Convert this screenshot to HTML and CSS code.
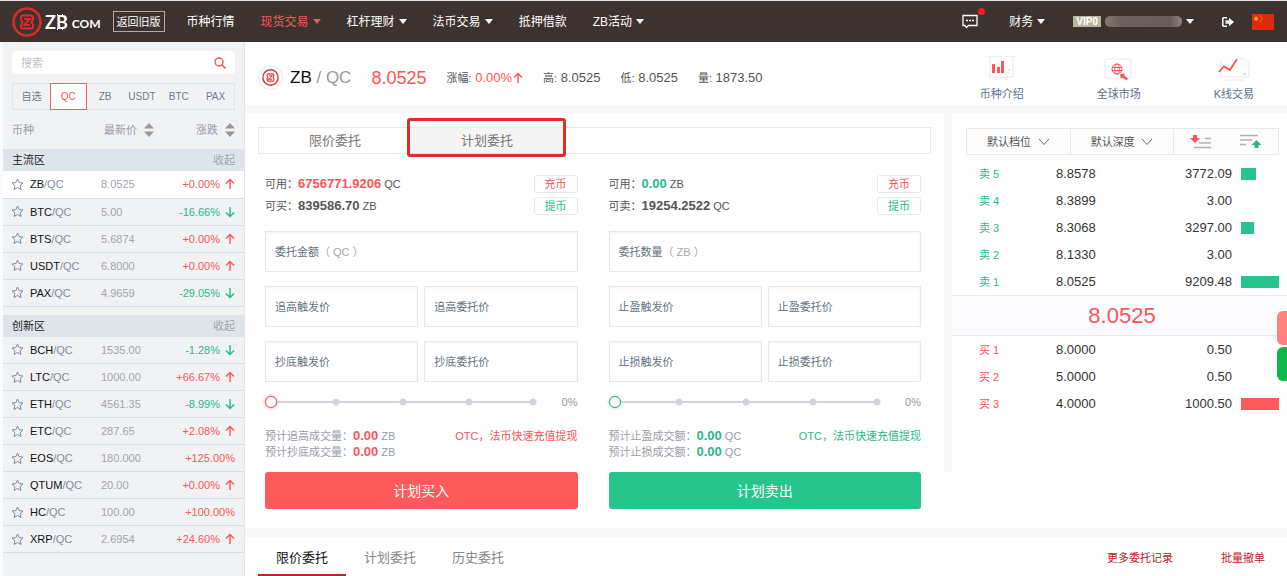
FILE: index.html
```html
<!DOCTYPE html>
<html lang="zh-CN">
<head>
<meta charset="utf-8">
<meta name="viewport" content="width=device-width, initial-scale=1">
<title>ZB/QC - ZB.COM</title>
<link rel="stylesheet" href="styles.css">
</head>
<body>
<svg class="sprite" aria-hidden="true">
  <symbol id="star" viewBox="0 0 13 13"><path d="M6.5 1 8.1 4.6 12 5 9.1 7.6 10 11.5 6.5 9.5 3 11.5 3.9 7.6 1 5 4.9 4.6Z" fill="none" stroke="currentColor" stroke-linejoin="round"/></symbol>
  <symbol id="up" viewBox="0 0 10 12"><path d="M5 11V1.5M1 5.5 5 1.5 9 5.5" fill="none" stroke="currentColor" stroke-width="1.4"/></symbol>
  <symbol id="down" viewBox="0 0 10 12"><path d="M5 1V10.500M1 6.500 5 10.500 9 6.500" fill="none" stroke="currentColor" stroke-width="1.4"/></symbol>
  <symbol id="sort" viewBox="0 0 10 14"><path d="M5 0 10 5.500H0ZM0 8.500H10L5 14Z" fill="currentColor"/></symbol>
  <symbol id="chev" viewBox="0 0 12 8"><path d="M1 1 6 6.500 11 1" fill="none" stroke="currentColor"/></symbol>
  <symbol id="mark" viewBox="0 0 30 30"><circle cx="15" cy="15" r="13.500" fill="none" stroke="currentColor" stroke-width="2.600"/><path d="M11 8.500H19Q21 8.500 21 10.500V12.500L19.500 15 21 17.500V19.500Q21 21.500 19 21.500H11Q9 21.500 9 19.500V17.500L10.500 15 9 12.500V10.500Q9 8.500 11 8.500Z" fill="none" stroke="currentColor" stroke-width="2" stroke-linejoin="round"/><path d="M12 12H18L12 18H18" fill="none" stroke="currentColor" stroke-width="1.800"/></symbol>
</svg>

<header class="header">
  <a class="logo" href="#"><svg class="logo-mark"><use href="#mark"/></svg><span class="logo-zb">ZB</span><span class="logo-com">COM</span></a>
  <button class="old-version" type="button">返回旧版</button>
  <nav class="nav">
    <a href="#">币种行情</a>
    <a class="active caret" href="#">现货交易</a>
    <a class="caret" href="#">杠杆理财</a>
    <a class="caret" href="#">法币交易</a>
    <a href="#">抵押借款</a>
    <a class="caret" href="#">ZB活动</a>
  </nav>
  <div class="account">
    <button class="message" type="button" aria-label="消息"><svg width="16" height="15" viewBox="0 0 16 15"><path d="M1 1.500H15V11.500H6.500L4.500 13.500 3 11.500H1Z" fill="none" stroke="#fff" stroke-width="1.300"/><path d="M4 6.500H6M7 6.500H9M10 6.500H12" stroke="#fff" stroke-width="1.500"/></svg></button>
    <a class="caret finance" href="#">财务</a>
    <a class="caret user" href="#"><span class="vip">VIP0</span><span class="username"></span></a>
    <button class="logout" type="button" aria-label="退出"><svg width="12" height="10" viewBox="0 0 12 10"><path d="M5 .8H1.500Q.8.8.8 1.500V8.500Q.8 9.200 1.500 9.200H5" fill="none" stroke="#fff" stroke-width="1.500"/><path d="M3.500 3.300H7V.8L12 5 7 9.200V6.700H3.500Z" fill="#fff"/></svg></button>
    <button class="flag" type="button" aria-label="中文"><svg width="22" height="16" viewBox="0 0 22 16"><path d="M0 0H22V16H0Z" fill="#de2910"/><path d="M4 1.500 4.800 3.700H7L5.200 5 5.900 7.200 4 5.900 2.100 7.200 2.800 5 1 3.700H3.200Z" fill="#ffb400"/><path d="M8 1.500h1v1h-1zM9.500 3h1v1h-1zM9.500 5h1v1h-1zM8 6.500h1v1h-1z" fill="#ffb400"/></svg></button>
  </div>
</header>

<div class="page">
  <aside class="sidebar">
    <label class="search"><input type="text" placeholder="搜索" aria-label="搜索"><svg width="12" height="12" viewBox="0 0 12 12"><circle cx="5" cy="5" r="4" fill="none" stroke="#f0565a" stroke-width="1.400"/><path d="M8 8 11.500 11.500" stroke="#f0565a" stroke-width="1.600"/></svg></label>
    <div class="markets">
      <button type="button">自选</button><button class="active" type="button">QC</button><button type="button">ZB</button><button type="button">USDT</button><button type="button">BTC</button><button type="button">PAX</button>
    </div>
    <div class="list-head"><span>币种</span><span class="sortable">最新价<svg class="sort"><use href="#sort"/></svg></span><span class="sortable last">涨跌<svg class="sort"><use href="#sort"/></svg></span></div>

    <section class="zone">
      <h2>主流区<button type="button">收起</button></h2>
      <table class="coins">
        <tr class="selected"><td><svg class="star"><use href="#star"/></svg></td><td><b>ZB</b>/QC</td><td>8.0525</td><td class="red">+0.00%<svg class="arrow"><use href="#up"/></svg></td></tr>
        <tr><td><svg class="star"><use href="#star"/></svg></td><td><b>BTC</b>/QC</td><td>5.00</td><td class="green">-16.66%<svg class="arrow"><use href="#down"/></svg></td></tr>
        <tr><td><svg class="star"><use href="#star"/></svg></td><td><b>BTS</b>/QC</td><td>5.6874</td><td class="red">+0.00%<svg class="arrow"><use href="#up"/></svg></td></tr>
        <tr><td><svg class="star"><use href="#star"/></svg></td><td><b>USDT</b>/QC</td><td>6.8000</td><td class="red">+0.00%<svg class="arrow"><use href="#up"/></svg></td></tr>
        <tr><td><svg class="star"><use href="#star"/></svg></td><td><b>PAX</b>/QC</td><td>4.9659</td><td class="green">-29.05%<svg class="arrow"><use href="#down"/></svg></td></tr>
      </table>
    </section>
    <section class="zone">
      <h2>创新区<button type="button">收起</button></h2>
      <table class="coins">
        <tr><td><svg class="star"><use href="#star"/></svg></td><td><b>BCH</b>/QC</td><td>1535.00</td><td class="green">-1.28%<svg class="arrow"><use href="#down"/></svg></td></tr>
        <tr><td><svg class="star"><use href="#star"/></svg></td><td><b>LTC</b>/QC</td><td>1000.00</td><td class="red">+66.67%<svg class="arrow"><use href="#up"/></svg></td></tr>
        <tr><td><svg class="star"><use href="#star"/></svg></td><td><b>ETH</b>/QC</td><td>4561.35</td><td class="green">-8.99%<svg class="arrow"><use href="#down"/></svg></td></tr>
        <tr><td><svg class="star"><use href="#star"/></svg></td><td><b>ETC</b>/QC</td><td>287.65</td><td class="red">+2.08%<svg class="arrow"><use href="#up"/></svg></td></tr>
        <tr><td><svg class="star"><use href="#star"/></svg></td><td><b>EOS</b>/QC</td><td>180.000</td><td class="red">+125.00%</td></tr>
        <tr><td><svg class="star"><use href="#star"/></svg></td><td><b>QTUM</b>/QC</td><td>20.00</td><td class="red">+0.00%<svg class="arrow"><use href="#up"/></svg></td></tr>
        <tr><td><svg class="star"><use href="#star"/></svg></td><td><b>HC</b>/QC</td><td>100.00</td><td class="red">+100.00%</td></tr>
        <tr><td><svg class="star"><use href="#star"/></svg></td><td><b>XRP</b>/QC</td><td>2.6954</td><td class="red">+24.60%<svg class="arrow"><use href="#up"/></svg></td></tr>
      </table>
    </section>
  </aside>

  <main class="main">
    <section class="ticker">
      <span class="coin"><svg width="17" height="17"><use href="#mark"/></svg></span>
      <h1>ZB <span>/ QC</span></h1>
      <strong class="last-price">8.0525</strong>
      <ul class="stats">
        <li><span>涨幅:</span> <i class="red">0.00%<svg class="arrow"><use href="#up"/></svg></i></li>
        <li><span>高:</span> 8.0525</li>
        <li><span>低:</span> 8.0525</li>
        <li><span>量:</span> 1873.50</li>
      </ul>
      <div class="shortcuts">
        <a href="#"><svg width="32" height="28" viewBox="0 0 32 28"><path d="M1 2.500H31M4 3V23H27V3M8 26 15 23 22 26" fill="none" stroke="#f1f1f4" stroke-width="1.500"/><path d="M6 10h3v9H6zM11 13h3v6h-3zM15 7h3v12h-3z" fill="#fb5558"/><path d="M23 15v2M23 18v2" stroke="#ececf1" stroke-width="2"/></svg>币种介绍</a>
        <a href="#"><svg width="32" height="28" viewBox="0 0 32 28"><rect x="2" y="5" width="26" height="19" rx="2" fill="none" stroke="#f1f1f4" stroke-width="1.500"/><g fill="none" stroke="#fb5558"><circle cx="14" cy="15" r="5"/><ellipse cx="14" cy="15" rx="2.300" ry="5"/><path d="M9 13.500h10M9 16.500h10"/></g><path d="M17 20 22 19.500 21 21.500 25 24.500 23.500 26.500 19.500 23.500 18 25Z" fill="#fb5558"/></svg>全球市场</a>
        <a href="#"><svg width="32" height="28" viewBox="0 0 32 28"><path d="M3 7V23H31V9Q28 4 20 5M7 26H26" fill="none" stroke="#f1f1f4" stroke-width="1.500"/><path d="M1 18 6 12.500 12 16 19 5" fill="none" stroke="#fb5558" stroke-width="1.800"/><path d="M25 20h3" stroke="#f9aaac"/></svg>K线交易</a>
      </div>
    </section>

    <div class="trade">
      <section class="order">
        <div class="order-tabs"><button type="button">限价委托</button><button class="active" type="button">计划委托</button></div>
        <div class="forms">
          <form class="buy">
            <div class="balance">
              <p>可用：<strong class="tone">6756771.9206</strong> QC</p><button class="red" type="button">充币</button>
              <p>可买：<strong>839586.70</strong> ZB</p><button class="green" type="button">提币</button>
            </div>
            <div class="fields">
              <label class="field wide"><span>委托金额<em>（ QC ）</em></span><input type="text"></label>
              <label class="field"><span>追高触发价</span><input type="text"></label>
              <label class="field"><span>追高委托价</span><input type="text"></label>
              <label class="field"><span>抄底触发价</span><input type="text"></label>
              <label class="field"><span>抄底委托价</span><input type="text"></label>
            </div>
            <div class="slider"><input type="range" min="0" max="100" value="0" aria-label="买入比例"><output>0%</output></div>
            <div class="estimate"><div><p>预计追高成交量：<strong class="tone">0.00</strong> ZB</p><p>预计抄底成交量：<strong class="tone">0.00</strong> ZB</p></div><a class="tone" href="#">OTC，法币快速充值提现</a></div>
            <button class="submit" type="button">计划买入</button>
          </form>
          <form class="sell">
            <div class="balance">
              <p>可用：<strong class="tone">0.00</strong> ZB</p><button class="red" type="button">充币</button>
              <p>可卖：<strong>19254.2522</strong> QC</p><button class="green" type="button">提币</button>
            </div>
            <div class="fields">
              <label class="field wide"><span>委托数量<em>（ ZB ）</em></span><input type="text"></label>
              <label class="field"><span>止盈触发价</span><input type="text"></label>
              <label class="field"><span>止盈委托价</span><input type="text"></label>
              <label class="field"><span>止损触发价</span><input type="text"></label>
              <label class="field"><span>止损委托价</span><input type="text"></label>
            </div>
            <div class="slider"><input type="range" min="0" max="100" value="0" aria-label="卖出比例"><output>0%</output></div>
            <div class="estimate"><div><p>预计止盈成交额：<strong class="tone">0.00</strong> QC</p><p>预计止损成交额：<strong class="tone">0.00</strong> QC</p></div><a class="tone" href="#">OTC，法币快速充值提现</a></div>
            <button class="submit" type="button">计划卖出</button>
          </form>
        </div>
      </section>

      <section class="book">
        <div class="book-tools">
          <label><select aria-label="档位"><option>默认档位</option></select><svg class="chev"><use href="#chev"/></svg></label>
          <label><select aria-label="深度"><option>默认深度</option></select><svg class="chev"><use href="#chev"/></svg></label>
          <div class="views">
            <button type="button" aria-label="卖盘"><svg width="22" height="15" viewBox="0 0 22 15"><path d="M3 1H7V4H10L5 9 0 4H3Z" fill="#fb5558"/><path d="M15 4.500H21M9 9H21M4 13.500H21" stroke="#b0b0b8" stroke-width="1.600"/></svg></button>
            <button type="button" aria-label="买盘"><svg width="22" height="15" viewBox="0 0 22 15"><path d="M0 1.500H18M0 6H12M0 10.500H6" stroke="#b0b0b8" stroke-width="1.600"/><path d="M16.500 6 21.500 11H18.500V14H14.500V11H11.500Z" fill="#29b889"/></svg></button>
          </div>
        </div>
        <table class="depth sells">
          <tr><th scope="row">卖 5</th><td>8.8578</td><td>3772.09</td><td><i class="bar" style="width:40%"></i></td></tr>
          <tr><th scope="row">卖 4</th><td>8.3899</td><td>3.00</td><td></td></tr>
          <tr><th scope="row">卖 3</th><td>8.3068</td><td>3297.00</td><td><i class="bar" style="width:35%"></i></td></tr>
          <tr><th scope="row">卖 2</th><td>8.1330</td><td>3.00</td><td></td></tr>
          <tr><th scope="row">卖 1</th><td>8.0525</td><td>9209.48</td><td><i class="bar" style="width:100%"></i></td></tr>
        </table>
        <div class="current">8.0525</div>
        <table class="depth buys">
          <tr><th scope="row">买 1</th><td>8.0000</td><td>0.50</td><td></td></tr>
          <tr><th scope="row">买 2</th><td>5.0000</td><td>0.50</td><td></td></tr>
          <tr><th scope="row">买 3</th><td>4.0000</td><td>1000.50</td><td><i class="bar" style="width:100%"></i></td></tr>
        </table>
      </section>
    </div>

    <section class="records">
      <div class="record-tabs"><button class="active" type="button">限价委托</button><button type="button">计划委托</button><button type="button">历史委托</button></div>
      <div class="record-links"><a href="#">更多委托记录</a><a href="#">批量撤单</a></div>
    </section>
  </main>
</div>
<div class="floaters"><button class="float-red" type="button" aria-label="买入"></button><button class="float-green" type="button" aria-label="卖出"></button></div>
</body>
</html>
```
FILE: styles.css
```css
:root {
  --red: #fb5558;
  --green: #29b889;
  --muted: #9a9cab;
  --line: #e6e8eb;
}
* { box-sizing: border-box; }
body {
  margin: 0;
  height: 100vh;
  overflow: hidden;
  display: flex;
  flex-direction: column;
  background: #fff;
  color: #555;
  font: 11px/16px "Liberation Sans", "Noto Sans CJK SC", sans-serif;
}
h1, h2, p, ul { margin: 0; padding: 0; font-weight: normal; }
a { color: inherit; text-decoration: none; }
button, input, select { font: inherit; color: inherit; border: 0; background: none; padding: 0; margin: 0; outline: 0; }
button { cursor: pointer; }
i, em { font-style: normal; }
table { border-collapse: collapse; table-layout: fixed; width: 100%; }
td, th { padding: 0; font-weight: normal; text-align: left; }
svg { flex: none; }
.sprite { position: absolute; width: 0; height: 0; }
.red { color: var(--red); }
.green { color: var(--green); }
.arrow { width: 10px; height: 12px; margin-left: 5px; vertical-align: -2px; }

/* Header */
.header {
  flex: none;
  display: flex;
  align-items: center;
  height: 42px;
  padding: 0 13px 0 12px;
  border-top: 1px solid #e8e4e2;
  background: #3c3230;
  color: #fff;
  font-size: 12px;
}
.logo { display: flex; align-items: center; }
.logo-mark { width: 30px; height: 30px; color: #dc2a26; }
.logo-zb { position: relative; margin-left: 3px; font: bold 18px/20px Lato, sans-serif; }
.logo-zb::before, .logo-zb::after { content: ""; position: absolute; right: 5px; width: 4px; height: 2px; border: solid #fff; border-width: 0 1px; }
.logo-zb::before { top: 2px; }
.logo-zb::after { bottom: 2px; }
.logo-com { margin: 4px 0 0 4px; font: bold 12px/16px Lato, sans-serif; }
.old-version { height: 21px; margin: 0 22px 0 12px; padding: 0 3px; border: 1px solid #b3a9a5; line-height: 18px; font-size: 11px; }
.nav { display: flex; gap: 26px; }
.nav .active { color: var(--red); }
.caret { display: flex; align-items: center; gap: 4px; }
.caret::after { content: ""; border: 5px solid transparent; border-top-color: currentColor; border-bottom: 0; border-left-width: 4px; border-right-width: 4px; }
.account { display: flex; align-items: center; margin-left: auto; }
.message { position: relative; display: flex; }
.message::after { content: ""; position: absolute; right: -7px; top: -6px; width: 7px; height: 7px; border-radius: 50%; background: #ee2222; }
.finance { margin: 0 28px 0 31px; }
.user { margin-right: 28px; }
.vip { height: 11px; padding: 0 3px; background: #b9b5a0; font: bold 10px/11px "Liberation Sans", sans-serif; }
.username { width: 77px; height: 11px; border-radius: 5px; background: linear-gradient(90deg, #817875, #6b615e 20%, #665c59 85%, #8a817e); }
.logout { display: flex; margin-right: 18px; }
.flag { display: flex; }

/* Sidebar */
.page { flex: 1; display: flex; min-height: 0; }
.sidebar { flex: none; width: 245px; border-left: 3px solid #fafbfc; border-right: 1px solid #e2e4e7; background: #f1f2f4; }
.search { display: flex; align-items: center; height: 23px; margin: 9px 9px 9px; padding: 0 9px; border-radius: 4px; background: #fff; }
.search input { flex: 1; min-width: 0; }
.search input::placeholder { color: #bfc1c8; }
.markets { display: grid; grid-template-columns: repeat(6, 1fr); height: 27px; margin: 0 9px; border: 1px solid #dfe4ea; color: #6b7b90; font-size: 10px; }
.markets .active { margin: -1px 0; border: 1px solid #ee6468; background: #fff; color: var(--red); }
.list-head { display: flex; align-items: center; height: 39px; padding: 0 9px; color: var(--muted); }
.list-head > span:first-child { width: 92px; }
.sortable { display: flex; align-items: center; gap: 7px; }
.sortable.last { margin-left: auto; }
.sort { width: 10px; height: 14px; color: #999; }
.zone { margin-bottom: 8px; }
.zone h2 { display: flex; justify-content: space-between; height: 22px; padding: 0 9px; background: #dfe4eb; color: #222; font-size: 11px; line-height: 22px; }
.zone h2 button { color: #9fa5b0; }
.coins tr { height: 27px; border-bottom: 1px solid #dadcdf; }
.coins .selected { background: #fff; }
.coins td { color: #858a9b; white-space: nowrap; }
.coins td:nth-child(1) { width: 27px; padding-left: 8px; }
.coins td:nth-child(2) { width: 71px; }
.coins td:nth-child(3) { color: #a2a5ae; }
.coins td:nth-child(4) { width: 74px; padding-right: 9px; text-align: right; }
.coins td.red { color: var(--red); }
.coins td.green { color: var(--green); }
.coins b { color: #111; font-weight: normal; }
.star { display: block; width: 13px; height: 13px; color: #858a9b; }

/* Ticker */
.main { flex: 1; min-width: 0; display: flex; flex-direction: column; }
.ticker { display: flex; align-items: center; height: 63px; padding: 8px 33px 0 13px; }
.coin { display: grid; place-items: center; width: 25px; height: 25px; border: 1px solid #e8e8e8; border-radius: 50%; color: #dc3a36; }
.ticker h1 { margin-left: 7px; color: #111; font-size: 17px; line-height: 24px; }
.ticker h1 span { color: #999; }
.last-price { margin-left: 20px; color: var(--red); font-size: 18px; font-weight: normal; }
.stats { display: flex; gap: 20px; margin-left: 20px; list-style: none; font-size: 13px; }
.stats span { font-size: 11px; }
.stats .arrow { margin-left: 1px; }
.shortcuts { display: flex; gap: 73px; margin-left: auto; color: #61708a; }
.shortcuts a { display: flex; flex-direction: column; align-items: center; gap: 4px; }

/* Order entry */
.trade { display: flex; align-items: flex-start; border-top: 8px solid #f8f8f8; border-bottom: 9px solid #f8f8f8; }
.order { flex: 1; min-width: 0; padding: 14px 13px 19px; }
.order-tabs { display: flex; height: 27px; border: 1px solid var(--line); color: #777; font-size: 13px; }
.order-tabs button { width: 152px; }
.order-tabs .active { position: relative; background: #f5f5f6; }
.order-tabs .active::after { content: ""; position: absolute; inset: -10px -3px -4px -4px; border: 3px solid #e12d23; border-radius: 3px; }
.forms { display: flex; gap: 31px; padding: 21px 10px 0 7px; }
.forms form { flex: 1; min-width: 0; }
.buy { --tone: var(--red); --fill: #ff5b5d; --glow: #fbb9b6; --ring: #c9615c; }
.sell { --tone: var(--green); --fill: #27c58d; --glow: #bdeedd; --ring: #3a9c7b; }
.tone { color: var(--tone); }
.balance { display: grid; grid-template-columns: 1fr 44px; gap: 4px; line-height: 18px; }
.balance strong { font-size: 13px; }
.balance button { height: 18px; border: 1px solid var(--line); border-radius: 3px; line-height: 16px; }
.fields { display: grid; grid-template-columns: 1fr 1fr; gap: 14px 6px; margin-top: 16px; }
.field { display: flex; align-items: center; min-width: 0; height: 41px; padding: 0 9px; border: 1px solid var(--line); box-shadow: inset 0 1px 3px #0000000d; color: #66727e; }
.field.wide { grid-column: 1 / -1; }
.field span { flex: none; }
.field em { color: #a5a7b0; }
.field input { flex: 1; min-width: 0; }
.slider { display: flex; align-items: center; justify-content: space-between; height: 40px; color: #999; }
.slider input {
  appearance: none;
  width: 88%;
  height: 14px;
  background:
    radial-gradient(circle, #d3d2df 3px, transparent 4px) 25% 50% / 8px 8px no-repeat,
    radial-gradient(circle, #d3d2df 3px, transparent 4px) 50% 50% / 8px 8px no-repeat,
    radial-gradient(circle, #d3d2df 3px, transparent 4px) 75% 50% / 8px 8px no-repeat,
    radial-gradient(circle, #d3d2df 3px, transparent 4px) 99% 50% / 8px 8px no-repeat,
    linear-gradient(#d3d2df, #d3d2df) 50% 50% / 96% 2px no-repeat;
}
.slider input::-webkit-slider-thumb { appearance: none; width: 12px; height: 12px; border: 1px solid var(--ring); border-radius: 50%; background: #fff; box-shadow: 0 0 3px 1px var(--glow); }
.estimate { display: flex; justify-content: space-between; margin-top: 6px; color: var(--muted); }
.estimate strong { font-size: 13px; }
.submit { display: block; width: 100%; height: 37px; margin-top: 12px; border-radius: 3px; background: var(--fill); color: #fff; font-size: 14px; }

/* Order book */
.book { flex: none; width: 343px; min-height: 359px; border-left: 8px solid #f8f8f8; }
.book-tools { display: grid; grid-template-columns: repeat(3, 1fr); height: 27px; margin: 15px 8px 5px 14px; border: 1px solid var(--line); background: #fcfcfd; }
.book-tools label { position: relative; display: flex; border-right: 1px solid var(--line); color: #555; }
.book-tools select { appearance: none; flex: 1; padding-left: 20px; }
.chev { position: absolute; right: 20px; top: 9px; width: 12px; height: 8px; color: #666; pointer-events: none; }
.views { display: flex; align-items: center; justify-content: space-between; padding: 0 16px; }
.views button { display: flex; }
.depth tr { height: 27px; }
.depth th { width: 104px; padding-left: 27px; }
.depth td { color: #333; font-size: 13px; }
.depth td:nth-child(3) { text-align: right; }
.depth td:nth-child(4) { width: 55px; padding: 0 8px 0 9px; }
.sells { color: var(--green); }
.buys { color: var(--red); }
.bar { display: block; height: 12px; background: #ff5b5d; }
.sells .bar { background: #27c58d; }
.current { height: 41px; border: solid var(--line); border-width: 1px 0; background: #fbfbfd; color: var(--red); font-size: 22px; line-height: 40px; text-align: center; padding-left: 5px; }

/* Records */
.records { display: flex; justify-content: space-between; padding: 0 22px 0 13px; }
.record-tabs { display: flex; color: #888; font-size: 13px; }
.record-tabs button { height: 39px; padding: 5px 18px 0; border-bottom: 2px solid transparent; }
.record-tabs .active { border-color: #c3202a; color: #111; }
.record-links { display: flex; align-items: center; gap: 48px; padding-top: 3px; color: #c3202a; }

.floaters { position: fixed; right: 0; top: 311px; display: grid; gap: 2px; }
.floaters button { width: 10px; height: 34px; border-radius: 6px 0 0 6px; }
.float-red { background: #ff8182; }
.float-green { background: #0fb84a; }
```
